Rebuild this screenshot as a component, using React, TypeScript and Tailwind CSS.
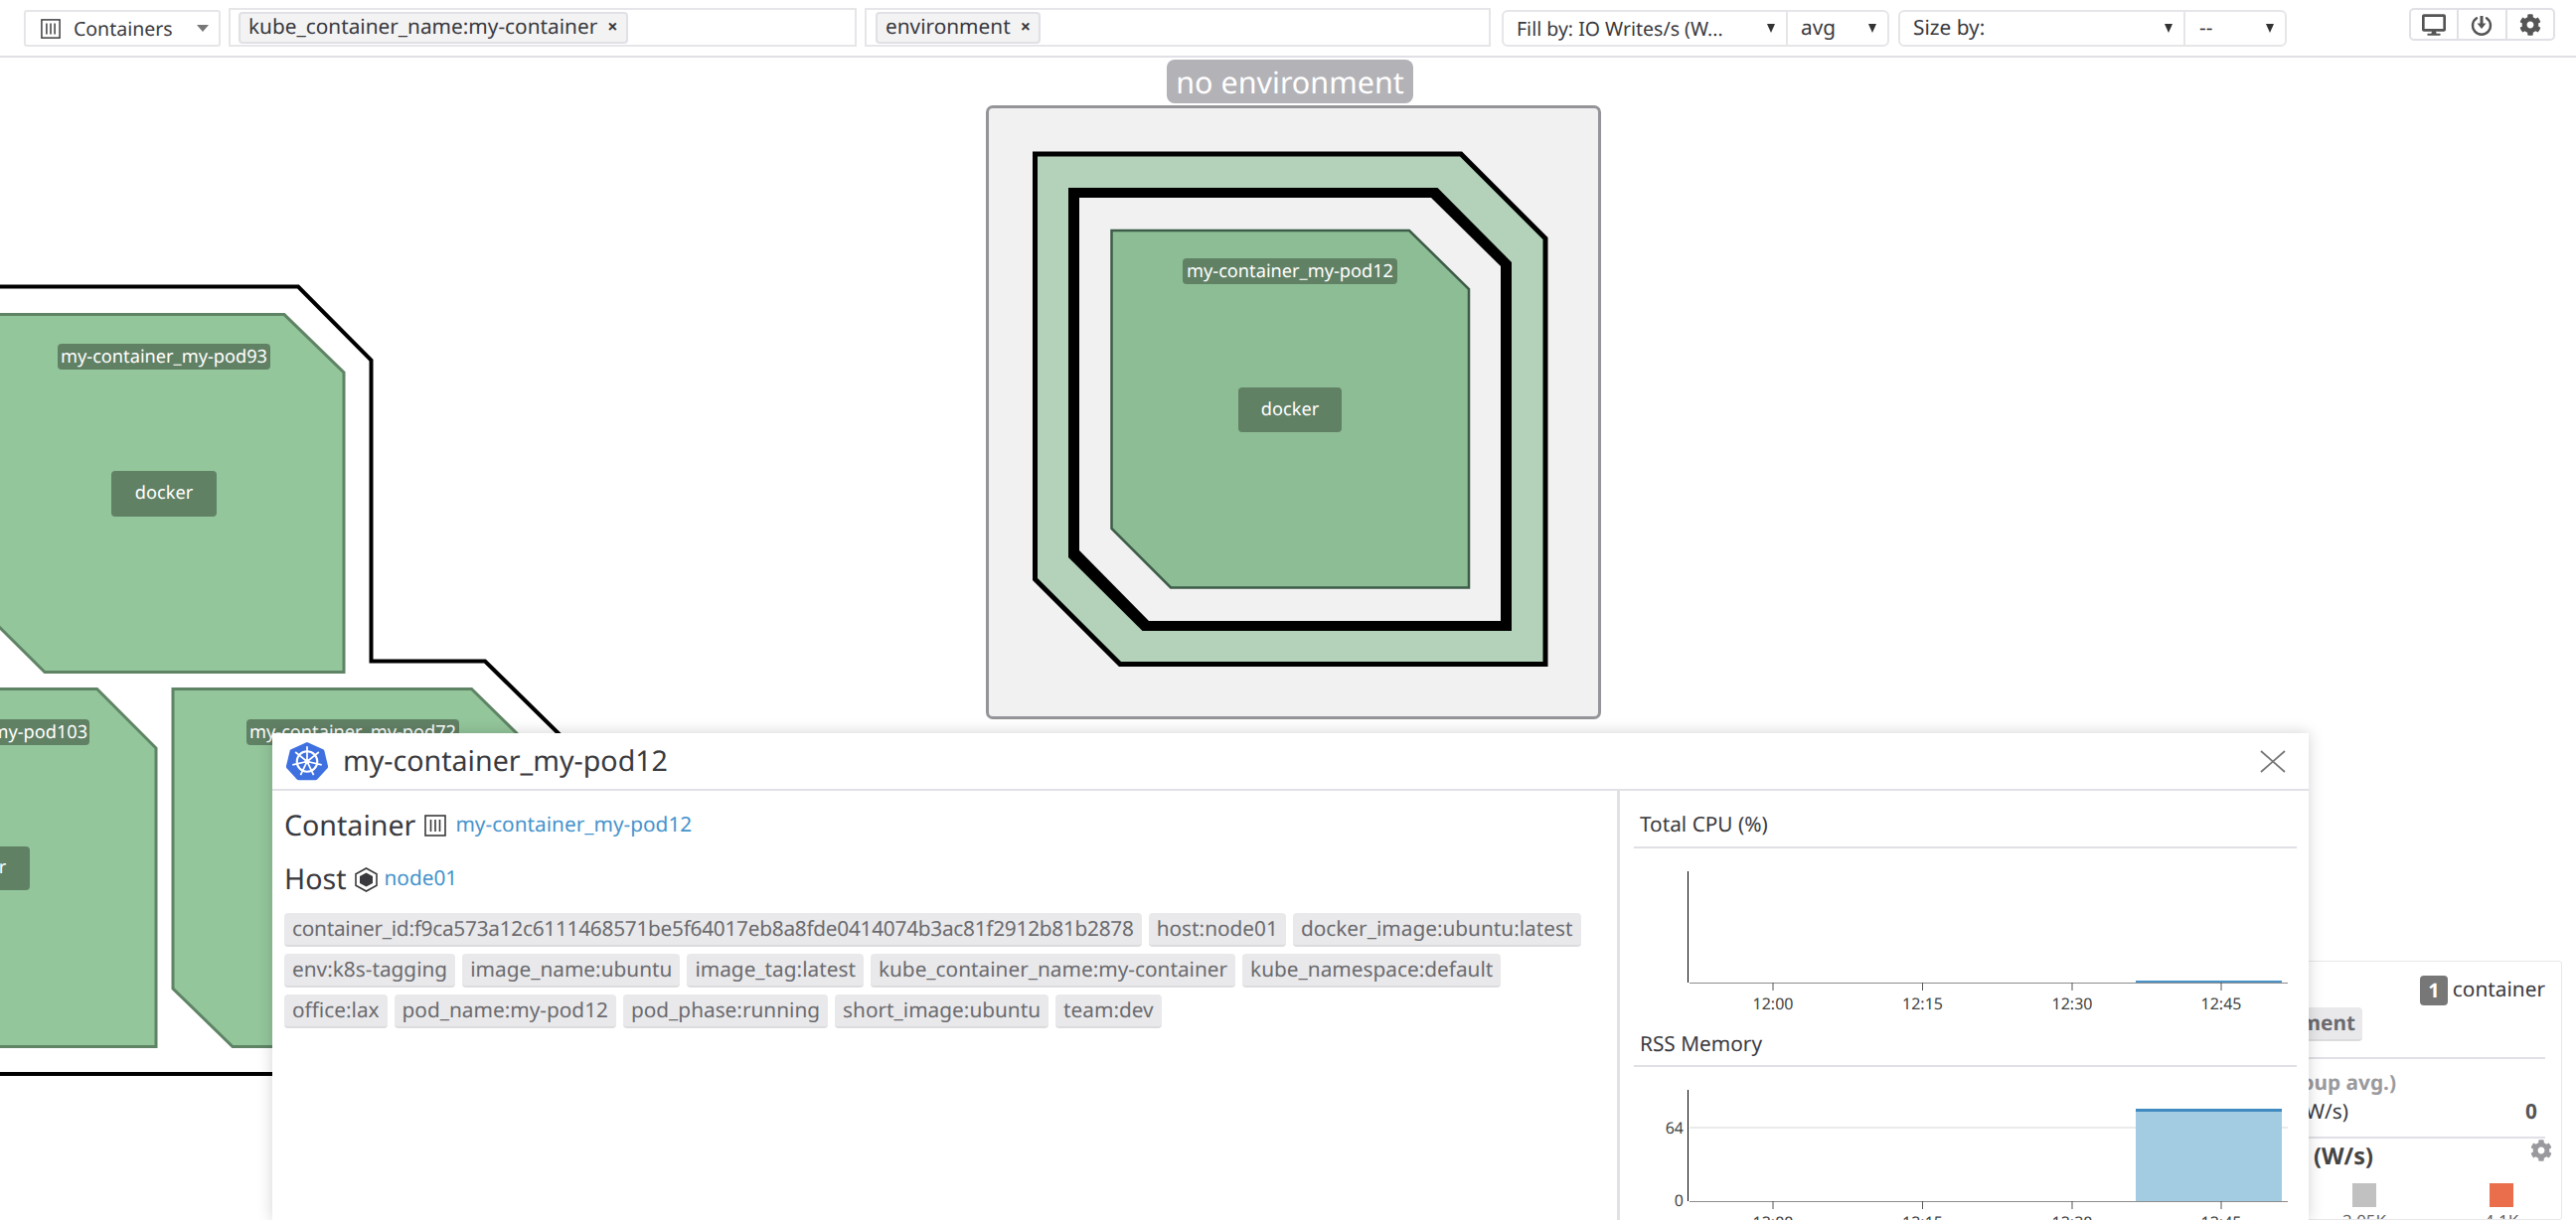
import { FaCog, FaDesktop } from "react-icons/fa";

const tags = [
  "container_id:f9ca573a12c6111468571be5f64017eb8a8fde0414074b3ac81f2912b81b2878",
  "host:node01",
  "docker_image:ubuntu:latest",
  "env:k8s-tagging",
  "image_name:ubuntu",
  "image_tag:latest",
  "kube_container_name:my-container",
  "kube_namespace:default",
  "office:lax",
  "pod_name:my-pod12",
  "pod_phase:running",
  "short_image:ubuntu",
  "team:dev",
];

function ContainerIcon({ className }: { className?: string }) {
  return (
    <svg viewBox="0 0 22 22" className={className} fill="none" stroke="#3a3a3e">
      <rect x="1" y="1" width="20" height="20" strokeWidth="1.6" />
      <path d="M6.5 5v12M11 5v12M15.5 5v12" strokeWidth="1.6" />
    </svg>
  );
}

function Arrow({ className, color = "#333" }: { className?: string; color?: string }) {
  return (
    <svg viewBox="0 0 10 8" className={className} preserveAspectRatio="none">
      <polygon points="0,0 10,0 5,8" fill={color} />
    </svg>
  );
}

function KubeLogo() {
  const spokes = [0, 1, 2, 3, 4, 5, 6];
  return (
    <svg viewBox="0 0 44 41" className="w-[44px] h-[40px] shrink-0">
      <path
        d="M22 1 L38.5 8.5 Q39.5 9 39.8 10 L43.6 26 Q43.8 27 43 28 L32.5 39.5 Q31.7 40.3 30.7 40.3 L13.3 40.3 Q12.3 40.3 11.5 39.5 L1 28 Q0.2 27 0.4 26 L4.2 10 Q4.5 9 5.5 8.5 Z"
        fill="#3f70e0"
      />
      <circle cx="22" cy="21" r="10.5" fill="none" stroke="#fff" strokeWidth="2.2" />
      <circle cx="22" cy="21" r="2.6" fill="#fff" />
      {spokes.map((i) => (
        <line
          key={i}
          x1="22"
          y1="21"
          x2="22"
          y2="5.5"
          stroke="#fff"
          strokeWidth="1.8"
          transform={`rotate(${(i * 360) / 7} 22 21)`}
        />
      ))}
    </svg>
  );
}

function HostIcon() {
  return (
    <svg viewBox="0 0 23 25" className="w-[23px] h-[25px] shrink-0">
      <polygon points="11.5,1 22,6.8 22,18.2 11.5,24 1,18.2 1,6.8" fill="none" stroke="#3a3a3e" strokeWidth="1.6" />
      <polygon points="11.5,5.5 18,9 18,16 11.5,19.5 5,16 5,9" fill="#3a3a3e" />
    </svg>
  );
}

function Chart({ bar, grid }: { bar: "line" | "area"; grid?: boolean }) {
  // coordinates start at the modal's right panel, x=1630
  const ticks = [
    [154, "12:00"],
    [304.5, "12:15"],
    [455, "12:30"],
    [605, "12:45"],
  ] as const;
  return (
    <svg width="690" height="140" className="block shrink-0 overflow-visible">
      {grid && <line x1="70" y1="58" x2="672" y2="58" stroke="#e4e4e8" strokeWidth="1.5" />}
      {bar === "area" && (
        <>
          <rect x="519" y="39" width="147" height="93" fill="#a3cbe2" />
          <rect x="519" y="39" width="147" height="3" fill="#3f8ac0" />
        </>
      )}
      {bar === "line" && <rect x="519" y="130" width="147" height="2" fill="#4a94ca" />}
      <line x1="68.5" y1="20" x2="68.5" y2="132" stroke="#000" strokeWidth="1" />
      <line x1="70" y1="132.5" x2="672" y2="132.5" stroke="#8c8c8c" strokeWidth="1" />
      {ticks.map(([x, t]) => (
        <g key={t}>
          <line x1={x} y1="132" x2={x} y2="140" stroke="#555" strokeWidth="1" />
          <text x={x} y="159" textAnchor="middle" fontSize="16" fill="#444">
            {t}
          </text>
        </g>
      ))}
      {grid && (
        <>
          <text x="64" y="64" textAnchor="end" fontSize="16" fill="#444">
            64
          </text>
          <text x="64" y="137" textAnchor="end" fontSize="16" fill="#444">
            0
          </text>
        </>
      )}
    </svg>
  );
}

function PodLabel({ className, children }: { className: string; children: string }) {
  return (
    <div
      className={`absolute h-[26px] bg-[#618165] text-white text-[18.2px] leading-[27px] rounded-[4px] text-center whitespace-nowrap ${className}`}
    >
      {children}
    </div>
  );
}

function DockerLabel({ className }: { className: string }) {
  return (
    <div
      className={`absolute bg-[#618165] text-white text-[18.2px] rounded-[4px] flex items-center justify-center ${className}`}
    >
      docker
    </div>
  );
}

function Diagram() {
  return (
    <div className="absolute inset-0">
      <div className="absolute left-[1174px] top-[60px] w-[248px] h-[44px] rounded-[8px] bg-[#b3b2b7] text-white text-[30.5px] leading-[44px] text-center whitespace-nowrap">
        no environment
      </div>
      <div className="absolute left-[992px] top-[106px] w-[619px] h-[618px] rounded-[7px] border-[3px] border-[#949499] bg-[#f1f1f1]" />
      <svg width="2592" height="1228" className="absolute left-0 top-0">
        <polygon
          points="-10,288.5 300,288.5 373.5,362.6 373.5,665.5 488,665.5 574,750 574,1081 -10,1081"
          fill="#fff"
          stroke="#000"
          strokeWidth="4"
        />
        <polygon
          points="-15,316.6 286,316.6 346,375 346,676.6 45,676.6 -15,617"
          fill="#93c69b"
          stroke="#5f8465"
          strokeWidth="3"
        />
        <polygon
          points="-20,693.5 97.6,693.5 157,753 157,1053.5 -20,1053.5"
          fill="#93c69b"
          stroke="#5f8465"
          strokeWidth="3"
        />
        <polygon
          points="174,693.5 474.5,693.5 535,753 535,1053.5 234,1053.5 174,995"
          fill="#93c69b"
          stroke="#5f8465"
          strokeWidth="3"
        />
        <polygon
          points="1041.5,155 1470,155 1555,240 1555,668.5 1127,668.5 1041.5,583"
          fill="#b4d2ba"
          stroke="#000"
          strokeWidth="5"
        />
        <polygon points="1075,189 1446.5,189 1521,264 1521,635 1149.5,635 1075,561" fill="#000" />
        <polygon points="1086,199 1440,199 1510,268 1510,625 1156,625 1086,554" fill="#f1f1f1" />
        <polygon
          points="1118.5,232 1418,232 1478,291 1478,591.5 1178,591.5 1118.5,532"
          fill="#8dbd94"
          stroke="#3d5c48"
          strokeWidth="2.5"
        />
      </svg>
      <PodLabel className="left-[1190px] top-[260px] w-[216px]">my-container_my-pod12</PodLabel>
      <DockerLabel className="left-[1246px] top-[390px] w-[104px] h-[45px]" />
      <PodLabel className="left-[58px] top-[346px] w-[214px]">my-container_my-pod93</PodLabel>
      <DockerLabel className="left-[112px] top-[474px] w-[106px] h-[46px]" />
      <PodLabel className="left-[-132px] top-[724px] w-[222px]">my-container_my-pod103</PodLabel>
      <DockerLabel className="left-[-76px] top-[852px] w-[106px] h-[44px]" />
      <PodLabel className="left-[248px] top-[724px] w-[214px]">my-container_my-pod72</PodLabel>
    </div>
  );
}

function SidePanel() {
  return (
    <div className="absolute left-[2200px] top-[967px] w-[378px] bottom-0 overflow-hidden rounded-[3px] border border-[#e8e8ea] bg-white pr-[16px] text-[#3a3a3e]">
      <div className="flex justify-end items-center gap-[5px] mt-[14px] h-[30px]">
        <span className="w-[28px] h-[30px] rounded-[4px] bg-[#777] text-white font-bold text-[20px] flex items-center justify-center">
          1
        </span>
        <span className="text-[20.8px]">container</span>
      </div>
      <div className="mt-[2px] w-[176px] h-[34px] rounded-[4px] bg-[#e9e9eb] border-b-2 border-[#dcdcdf] flex justify-end pr-[7px] text-[20.8px] leading-[32px] font-bold text-[#6b6b6f]">
        <span className="whitespace-nowrap">environment</span>
      </div>
      <div className="mt-[16px] border-t-2 border-[#e0e0e6]" />
      <div className="mt-[11px] w-[210px] flex justify-end text-[20.8px] leading-[26px] font-bold text-[#9a9a9e]">
        <span className="whitespace-nowrap">Fill by (group avg.)</span>
      </div>
      <div className="mt-[3px] flex justify-between items-center pr-[8px] h-[28px]">
        <span className="w-[162px] flex justify-end text-[20.8px]">
          <span className="whitespace-nowrap">IO Writes/s (W/s)</span>
        </span>
        <span className="font-bold text-[20.8px] text-[#555]">0</span>
      </div>
      <div className="mt-[10px] border-t-2 border-[#e0e0e6]" />
      <div className="flex justify-between items-start h-[45px]">
        <span className="w-[187px] flex justify-end text-[23.4px] font-bold text-[#444]">
          <span className="whitespace-nowrap">IO Writes/s (W/s)</span>
        </span>
        <FaCog className="text-[#9a9a9e] w-[22px] h-[22px] mt-[1px] mr-[-7px]" />
      </div>
      <div className="flex">
        <div className="ml-[166px] w-[24px] flex flex-col items-center">
          <div className="w-[24px] h-[24px] bg-[#c1c1c1] shrink-0" />
          <span className="text-[16.9px] mt-[1px] text-[#666] whitespace-nowrap">2.05K</span>
        </div>
        <div className="ml-[114px] w-[24px] flex flex-col items-center">
          <div className="w-[24px] h-[24px] bg-[#ea6e4c] shrink-0" />
          <span className="text-[16.9px] mt-[1px] text-[#666] whitespace-nowrap">4.1K</span>
        </div>
      </div>
    </div>
  );
}

function Modal() {
  return (
    <div className="absolute left-[274px] top-[738px] w-[2049px] bottom-0 bg-white shadow-[0_0_14px_rgba(0,0,0,0.18)] flex flex-col overflow-hidden">
      <div className="h-[58px] shrink-0 border-b-2 border-[#e0e0e6] flex items-center pl-[13px] pr-[23px]">
        <KubeLogo />
        <span className="ml-[14px] text-[28.6px] text-[#3a3a3e]">my-container_my-pod12</span>
        <svg viewBox="0 0 26 23" className="ml-auto w-[26px] h-[23px]">
          <path d="M1 1L25 22M25 1L1 22" stroke="#777" strokeWidth="1.8" fill="none" />
        </svg>
      </div>
      <div className="flex flex-1 min-h-0">
        <div className="w-[1356px] shrink-0 border-r-[3px] border-[#e0e0e6] pl-[12px] pr-[8px] pt-[14px]">
          <div className="flex items-center h-[42px] text-[#3a3a3e]">
            <span className="text-[28.6px]">Container</span>
            <ContainerIcon className="w-[22px] h-[22px] ml-[9px]" />
            <a className="ml-[9px] text-[20.8px] text-[#4594cc]">my-container_my-pod12</a>
          </div>
          <div className="flex items-center h-[42px] mt-[12px] text-[#3a3a3e]">
            <span className="text-[28.6px]">Host</span>
            <span className="ml-[8px]">
              <HostIcon />
            </span>
            <a className="ml-[7px] text-[20.8px] text-[#4594cc]">node01</a>
          </div>
          <div className="flex flex-wrap gap-x-[7px] gap-y-[7px] mt-[13px]">
            {tags.map((t, i) => (
              <span
                key={t}
                className={`h-[34px] px-[8px] rounded-[4px] bg-[#e9e9eb] border-b-2 border-[#dcdcdf] text-[20.8px] leading-[32px] text-[#6b6b6f] whitespace-nowrap ${
                  i === 0 ? "tracking-[-0.26px]" : ""
                }`}
              >
                {t}
              </span>
            ))}
          </div>
        </div>
        <div className="flex-1 pl-[14px] pr-[12px] flex flex-col min-w-0">
          <div className="text-[20.8px] text-[#3a3a3e] pl-[6px] h-[58px] border-b-2 border-[#e0e0e6] pt-[19px] shrink-0">
            Total CPU (%)
          </div>
          <div className="ml-[-14px] mt-[3px]">
            <Chart bar="line" />
          </div>
          <div className="text-[20.8px] text-[#3a3a3e] pl-[6px] mt-[20px] h-[57px] border-b-2 border-[#e0e0e6] pt-[19px] shrink-0">
            RSS Memory
          </div>
          <div className="ml-[-14px] mt-[3px]">
            <Chart bar="area" grid />
          </div>
        </div>
      </div>
    </div>
  );
}

export default function App() {
  return (
    <div className="relative w-[2592px] h-[1228px] overflow-hidden bg-white font-['Noto_Sans',sans-serif] [text-rendering:geometricPrecision] text-[20.8px] text-[#3a3a3e]">
      <Diagram />
      <SidePanel />
      <Modal />
      <header className="relative h-[58px] bg-white border-b-2 border-[#e0e0e6] flex items-start pt-[8px] pl-[24px]">
        <div className="mt-[2px] w-[198px] h-[37px] rounded-[3px] border-2 border-[#e6e6ea] flex items-center pl-[15px] pr-[10px] text-[19.5px]">
          <ContainerIcon className="w-[20px] h-[20px]" />
          <span className="ml-[13px]">Containers</span>
          <Arrow className="ml-auto w-[12px] h-[7px]" color="#777" />
        </div>
        <div className="ml-[8px] w-[632px] h-[39px] border-2 border-[#e6e6ea] flex items-center pl-[8px]">
          <span className="h-[32px] px-[8px] rounded-[4px] bg-[#f3f3f4] border-2 border-[#e0e0e6] flex items-center gap-[10px]">
            kube_container_name:my-container
            <span className="font-bold text-[18px]">×</span>
          </span>
        </div>
        <div className="ml-[8px] w-[630px] h-[39px] border-2 border-[#e6e6ea] flex items-center pl-[9px]">
          <span className="h-[32px] px-[8px] rounded-[4px] bg-[#f3f3f4] border-2 border-[#e0e0e6] flex items-center gap-[10px]">
            environment
            <span className="font-bold text-[18px]">×</span>
          </span>
        </div>
        <div className="ml-[11px] mt-[2px] w-[390px] h-[37px] rounded-[6px] border-2 border-[#e6e6ea] flex items-center">
          <div className="w-[286px] h-full flex items-center pl-[13px] pr-[11px] border-r-2 border-[#e6e6ea] text-[19.5px]">
            Fill by: IO Writes/s (W...
            <Arrow className="ml-auto w-[8px] h-[9px]" />
          </div>
          <div className="flex-1 h-full flex items-center pl-[13px] pr-[11px]">
            avg
            <Arrow className="ml-auto w-[8px] h-[9px]" />
          </div>
        </div>
        <div className="ml-[9px] mt-[2px] w-[391px] h-[37px] rounded-[6px] border-2 border-[#e6e6ea] flex items-center">
          <div className="w-[287px] h-full flex items-center pl-[13px] pr-[11px] border-r-2 border-[#e6e6ea]">
            Size by:
            <Arrow className="ml-auto w-[8px] h-[9px]" />
          </div>
          <div className="flex-1 h-full flex items-center pl-[14px] pr-[11px]">
            --
            <Arrow className="ml-auto w-[8px] h-[9px]" />
          </div>
        </div>
        <div className="ml-[123px] w-[147px] h-[33px] rounded-[5px] border-2 border-[#e0e0e6] flex items-stretch text-[#555]">
          <div className="flex-1 flex items-center justify-center border-r-2 border-[#e0e0e6]">
            <FaDesktop className="w-[24px] h-[22px]" />
          </div>
          <div className="flex-1 flex items-center justify-center border-r-2 border-[#e0e0e6]">
            <svg viewBox="0 0 22 22" className="w-[22px] h-[22px]" fill="none" stroke="#555">
              <path d="M6 4.2A9 9 0 1 0 16 4.2" strokeWidth="2.4" strokeLinecap="round" />
              <path d="M11 2v10" strokeWidth="3" />
              <path d="M6.5 9.5h9L11 15z" fill="#555" stroke="none" />
            </svg>
          </div>
          <div className="flex-1 flex items-center justify-center">
            <FaCog className="w-[22px] h-[22px]" />
          </div>
        </div>
      </header>
    </div>
  );
}
